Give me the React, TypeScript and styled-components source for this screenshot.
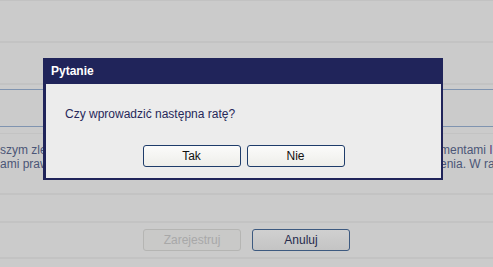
import React from 'react'
import styled, { createGlobalStyle } from 'styled-components'

const GlobalStyle = createGlobalStyle`
  html, body {
    margin: 0;
    padding: 0;
    overflow: hidden;
    background: #cbcbcb;
  }
`

const App = () => {
  return (
    <>
      <GlobalStyle />
      <Page>
        <Band $height={40} $top="#c2c2c2" $bottom="#c3c3c3" $bottomWidth={2} />
        <Band $height={40} $bottom="#c3c3c3" $bottomWidth={2} />
        <Band $height={4} $bottom="#8094b0" $bottomWidth={1} />
        <Band $height={36} $bottom="#8094b0" $bottomWidth={1} />
        <Band $height={6} $bottom="#c3c3c3" $bottomWidth={1} />

        <TextBand>
          <TextLine>
            <LeftText>szym zlecen</LeftText>
            <RightText>
              mentami <Link>I</Link>
            </RightText>
          </TextLine>
          <TextLine>
            <LeftText>ami prawa</LeftText>
            <RightText>enia. W ra</RightText>
          </TextLine>
        </TextBand>

        <Band $height={26} $bottom="#c3c3c3" $bottomWidth={2} />

        <ActionBand>
          <PageButton disabled>Zarejestruj</PageButton>
          <PageButton>Anuluj</PageButton>
        </ActionBand>

        <Band $height={8} />

        <Dialog>
          <DialogTitle>Pytanie</DialogTitle>
          <DialogBody>
            <Question>Czy wprowadzić następna ratę?</Question>
            <DialogActions>
              <DialogButton>Tak</DialogButton>
              <DialogButton>Nie</DialogButton>
            </DialogActions>
          </DialogBody>
        </Dialog>
      </Page>
    </>
  )
}

export default App

const Page = styled.div`
  position: relative;
  display: flex;
  flex-direction: column;
  width: 493px;
  height: 267px;
  overflow: hidden;
  background: #cbcbcb;
  font-family: 'Liberation Sans', Arial, sans-serif;
`

const Band = styled.div<{
  $height: number
  $top?: string
  $bottom?: string
  $bottomWidth?: number
}>`
  flex: none;
  height: ${({ $height }) => $height}px;
  border-top: ${({ $top }) => ($top ? `1px solid ${$top}` : 'none')};
  border-bottom: ${({ $bottom, $bottomWidth }) =>
    $bottom ? `${$bottomWidth ?? 1}px solid ${$bottom}` : 'none'};
`

const TextBand = styled.div`
  flex: none;
  display: flex;
  flex-direction: column;
  height: 50px;
  padding-top: 9px;
  border-bottom: 2px solid #c3c3c3;
  box-sizing: content-box;
`

const TextLine = styled.div`
  display: grid;
  grid-template-columns: 440px 1fr;
  height: 14px;
  font-size: 12px;
  line-height: 14px;
  color: #4c5677;
  white-space: nowrap;
`

const LeftText = styled.span`
  overflow: hidden;
`

const RightText = styled.span`
  overflow: hidden;
`

const Link = styled.span`
  color: #5f3f7c;
`

const ActionBand = styled.div`
  flex: none;
  display: flex;
  justify-content: center;
  gap: 11px;
  height: 22px;
  padding: 6px 0;
  border-bottom: 2px solid #c3c3c3;
  box-sizing: content-box;
`

const PageButton = styled.button`
  width: 98px;
  height: 22px;
  padding: 0;
  font-family: 'Liberation Sans', Arial, sans-serif;
  font-size: 12px;
  color: #262a4c;
  background: linear-gradient(#d0d0d0, #c4c4c4);
  border: 1px solid #3d5a80;
  border-radius: 3px;

  &:disabled {
    color: #a8a8a8;
    background: #c9c9c8;
    border-color: #b5b5b3;
  }
`

const Dialog = styled.div`
  position: absolute;
  top: 58px;
  left: 43px;
  display: flex;
  flex-direction: column;
  width: 400px;
  box-sizing: border-box;
  background: #20245a;
  border-left: 3px solid #20245a;
  border-right: 2px solid #20245a;
  border-bottom: 2px solid #20245a;
`

const DialogTitle = styled.div`
  display: flex;
  align-items: center;
  height: 26px;
  padding-left: 5px;
  font-size: 12px;
  font-weight: bold;
  color: #ffffff;
`

const DialogBody = styled.div`
  display: flex;
  flex-direction: column;
  padding: 22px 0 11px 19px;
  background: #ececec;
`

const Question = styled.div`
  height: 16px;
  font-size: 12px;
  line-height: 16px;
  color: #27285a;
`

const DialogActions = styled.div`
  display: flex;
  justify-content: center;
  gap: 6px;
  margin-top: 23px;
  margin-left: -19px;
`

const DialogButton = styled.button`
  width: 98px;
  height: 22px;
  padding: 0;
  font-family: 'Liberation Sans', Arial, sans-serif;
  font-size: 12px;
  color: #111111;
  background: linear-gradient(#fbfbfa, #eeeeea);
  border: 1px solid #1e3c6a;
  border-radius: 3px;
`
